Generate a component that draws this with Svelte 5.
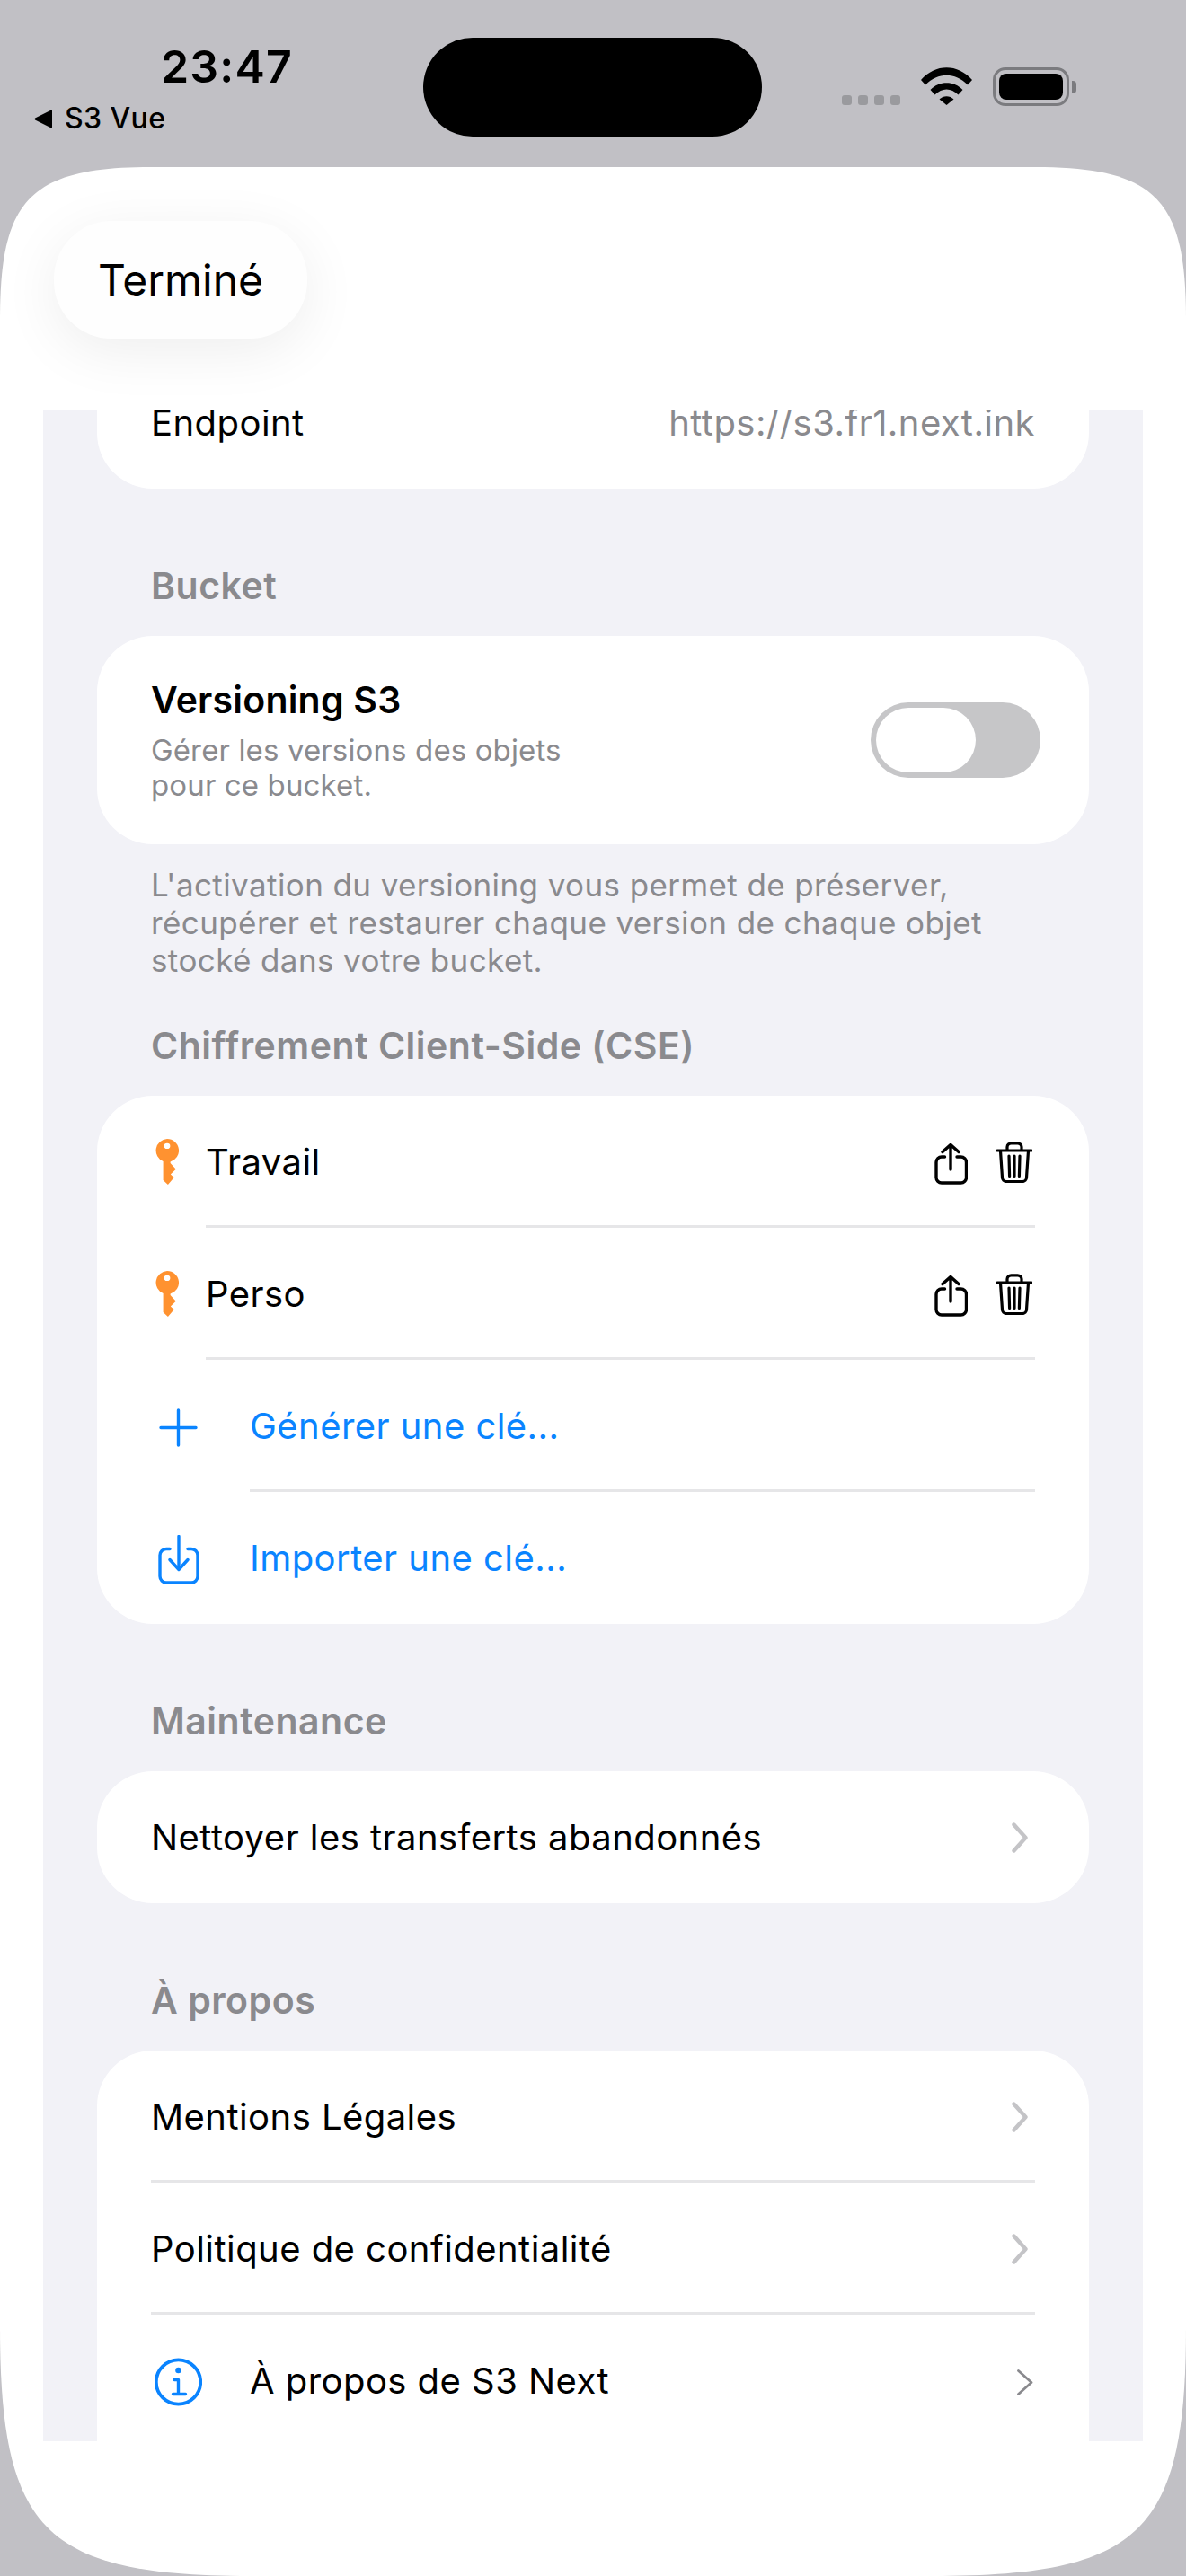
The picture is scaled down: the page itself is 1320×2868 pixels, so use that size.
<script lang="ts">
  const keys = ["Travail", "Perso"];
  const legal = ["Mentions Légales", "Politique de confidentialité"];
</script>

<div class="screen">
  <header class="status">
    <div class="status-left">
      <div class="time">23:47</div>
      <div class="back">
        <svg class="back-arrow" viewBox="0 0 21 21" width="21" height="21">
          <path d="M20 1.5 V19.5 Q20 21 18.5 20.2 L1 11.5 Q0 10.5 1 9.5 L18.5 .8 Q20 0 20 1.5 Z" fill="#000" />
        </svg>
        <span>S3 Vue</span>
      </div>
    </div>
    <div class="island"></div>
    <div class="status-right">
      <div class="dots">
        <i></i><i></i><i></i><i></i>
      </div>
      <svg class="wifi" viewBox="0 0 57 42" width="57" height="42">
        <path d="M0 14 C16 -4.5 41 -4.5 57 14 L52 19.5 C38 5 19 5 5 19.5 Z" fill="#000" />
        <path d="M10.5 25 C20 14.5 37 14.5 46.5 25 L41.5 30.5 C33.5 22.5 23.5 22.5 15.5 30.5 Z" fill="#000" />
        <path d="M20.5 35.5 C25 31 32 31 36.5 35.5 L28.5 42 Z" fill="#000" />
      </svg>
      <div class="battery">
        <div class="battery-shell"><div class="battery-level"></div></div>
        <div class="battery-nub"></div>
      </div>
    </div>
  </header>

  <main class="sheet">
    <div class="nav">
      <button type="button" class="done">Terminé</button>
    </div>

    <div class="form">
      <section class="card endpoint">
        <div class="row">
          <div class="row-body last">
            <span>Endpoint</span>
            <span class="value">https://s3.fr1.next.ink</span>
          </div>
        </div>
      </section>

      <h2 class="label">Bucket</h2>
      <section class="card versioning">
        <div class="versioning-text">
          <div class="versioning-title">Versioning S3</div>
          <div class="versioning-sub">Gérer les versions des objets<br />pour ce bucket.</div>
        </div>
        <div class="toggle"><div class="thumb"></div></div>
      </section>
      <p class="footnote">
        L'activation du versioning vous permet de préserver,<br />
        récupérer et restaurer chaque version de chaque objet<br />
        stocké dans votre bucket.
      </p>

      <h2 class="label after-note">Chiffrement Client-Side (CSE)</h2>
      <section class="card">
        {#each keys as name}
          <div class="row">
            <svg class="key" viewBox="0 0 26 51" width="26" height="51">
              <path
                fill-rule="evenodd"
                d="M13 0 A13 13 0 0 1 16.6 25.5 V27 L22.8 33.7 L16.8 39.5 L20.7 43 L13.9 51 L8.6 46 V25 A13 13 0 0 1 13 0 Z M13 4.8 A3.4 3.1 0 1 0 13 11 A3.4 3.1 0 1 0 13 4.8 Z"
                fill="#ff9230"
              />
            </svg>
            <div class="row-body">
              <span>{name}</span>
              <div class="actions">
                <svg class="share" viewBox="0 0 37 46" width="37" height="46" fill="none" stroke="#000" stroke-width="3.4" stroke-linecap="round" stroke-linejoin="round">
                  <path d="M18 2 V29 M9 9.5 L18 1.5 L27 9.5" />
                  <path d="M11.5 15 H8 A6 6 0 0 0 2 21 V38 A6 6 0 0 0 8 44 H29.5 A6 6 0 0 0 35.5 38 V21 A6 6 0 0 0 29.5 15 H25" />
                </svg>
                <svg class="trash" viewBox="0 0 40 46" width="40" height="46" fill="none" stroke="#000" stroke-width="3.2" stroke-linecap="round" stroke-linejoin="round">
                  <path d="M1 10 H39" />
                  <path d="M12 9 V6 A4.5 4.5 0 0 1 16.5 1.8 H23.5 A4.5 4.5 0 0 1 28 6 V9" />
                  <path d="M4.5 10.5 L6.5 40 A4.5 4.5 0 0 0 11 44.5 H29 A4.5 4.5 0 0 0 33.5 40 L35.5 10.5" />
                  <path d="M14 16 L14.6 38.5 M20 16 V38.5 M26 16 L25.4 38.5" />
                </svg>
              </div>
            </div>
          </div>
        {/each}
        <div class="row action">
          <div class="icon-cell">
            <svg viewBox="0 0 43 43" width="43" height="43" fill="none" stroke="#0a84ff" stroke-width="3.4" stroke-linecap="round">
              <path d="M21.5 2 V41 M2 21.5 H41" />
            </svg>
          </div>
          <div class="row-body"><span>Générer une clé...</span></div>
        </div>
        <div class="row action">
          <div class="icon-cell">
            <svg viewBox="0 0 46 55" width="46" height="55" fill="none" stroke="#0a84ff" stroke-width="3.4" stroke-linecap="round" stroke-linejoin="round">
              <path d="M13 15.5 H9 A7 7 0 0 0 2 22.5 V46 A7 7 0 0 0 9 53 H37 A7 7 0 0 0 44 46 V22.5 A7 7 0 0 0 37 15.5 H33" />
              <path d="M23 1.5 V38 M13 27.5 L23 38.5 L33 27.5" />
            </svg>
          </div>
          <div class="row-body last"><span>Importer une clé...</span></div>
        </div>
      </section>

      <h2 class="label">Maintenance</h2>
      <section class="card">
        <div class="row">
          <div class="row-body last">
            <span>Nettoyer les transferts abandonnés</span>
            <svg class="chevron" viewBox="0 0 18 34" width="18" height="34" fill="none" stroke="#c4c4c7" stroke-width="4.4" stroke-linecap="round" stroke-linejoin="round">
              <path d="M2.5 2.5 L15.5 17 L2.5 31.5" />
            </svg>
          </div>
        </div>
      </section>

      <h2 class="label">À propos</h2>
      <section class="card open-end">
        {#each legal as item}
          <div class="row">
            <div class="row-body">
              <span>{item}</span>
              <svg class="chevron" viewBox="0 0 18 34" width="18" height="34" fill="none" stroke="#c4c4c7" stroke-width="4.4" stroke-linecap="round" stroke-linejoin="round">
                <path d="M2.5 2.5 L15.5 17 L2.5 31.5" />
              </svg>
            </div>
          </div>
        {/each}
        <div class="row">
          <div class="icon-cell">
            <svg viewBox="0 0 53 54" width="53" height="54" fill="none" stroke="#0a84ff">
              <circle cx="26.5" cy="27" r="24.7" stroke-width="3.8" />
              <circle cx="26.5" cy="14" r="3.3" fill="#0a84ff" stroke="none" />
              <path d="M22 24.5 H26.5 V40 M20.5 40.5 H34.5" stroke-width="3.4" stroke-linecap="round" stroke-linejoin="round" />
            </svg>
          </div>
          <div class="row-body last">
            <span>À propos de S3 Next</span>
            <svg class="chevron thin" viewBox="0 0 18 29" width="18" height="29" fill="none" stroke="#8a8a8e" stroke-width="2.8" stroke-linecap="round" stroke-linejoin="round">
              <path d="M1.5 1.5 L16 14.5 L1.5 27.5" />
            </svg>
          </div>
        </div>
      </section>
    </div>
  </main>
</div>

<style>
  :global(body) {
    margin: 0;
    background: #c1c0c5;
  }

  .screen {
    width: 1320px;
    height: 2868px;
    background: #c1c0c5;
    font-family: Inter, "Liberation Sans", sans-serif;
    color: #000;
    overflow: hidden;
  }

  .status {
    position: relative;
    height: 186px;
    display: flex;
    justify-content: space-between;
  }

  .status-left {
    padding: 44px 0 0 38px;
  }

  .time {
    margin-left: 141px;
    font-size: 50px;
    line-height: 60px;
    font-weight: 600;
    letter-spacing: 1.2px;
  }

  .back {
    display: flex;
    align-items: center;
    gap: 13px;
    margin-top: 8px;
    font-size: 32px;
    line-height: 40px;
    font-weight: 500;
    letter-spacing: 0.4px;
  }

  .island {
    position: absolute;
    left: 471px;
    top: 42px;
    width: 377px;
    height: 110px;
    border-radius: 55px;
    background: #000;
  }

  .status-right {
    display: flex;
    align-items: flex-end;
    height: 43px;
    padding: 75px 122px 0 0;
  }

  .dots {
    display: flex;
    gap: 7px;
    margin-right: 23px;
    padding-bottom: 1px;
  }

  .dots i {
    width: 11px;
    height: 11px;
    border-radius: 3px;
    background: #9a9a9e;
  }

  .wifi {
    margin-right: 23px;
    margin-bottom: 1px;
  }

  .battery {
    display: flex;
    align-items: center;
    gap: 3px;
  }

  .battery-shell {
    box-sizing: border-box;
    width: 85px;
    height: 43px;
    padding: 4px;
    border: 3.5px solid #7b7b7f;
    border-radius: 14px;
  }

  .battery-level {
    width: 100%;
    height: 100%;
    border-radius: 8px;
    background: #000;
  }

  .battery-nub {
    width: 5px;
    height: 14px;
    border-radius: 0 4px 4px 0;
    background: #7b7b7f;
  }

  .sheet {
    height: 2682px;
    background: #fff;
    clip-path: path("M0 171 C0 39 30 0 168 0 L1152 0 C1290 0 1320 39 1320 171 L1320 2404 C1320 2634 1270 2682 1037 2682 L283 2682 C50 2682 0 2634 0 2404 Z");
  }

  .nav {
    box-sizing: border-box;
    height: 270px;
    padding: 60px 0 0 60px;
  }

  .done {
    width: 282px;
    height: 131px;
    padding: 0;
    border: 0;
    border-radius: 64px;
    background: #fefefe;
    box-shadow: 0 14px 64px rgba(0, 0, 0, 0.07);
    color: #000;
    font: inherit;
    font-size: 48px;
  }

  .form {
    height: 2262px;
    margin: 0 48px;
    padding: 0 60px;
    overflow: hidden;
    background: #f2f2f7;
  }

  .card {
    border-radius: 62px;
    background: #fff;
    font-size: 40px;
    letter-spacing: 0.45px;
  }

  .card.open-end {
    padding-bottom: 80px;
  }

  .endpoint {
    margin-top: -59px;
  }

  .label {
    margin: 83px 0 31px 60px;
    font-size: 41px;
    line-height: 50px;
    font-weight: 600;
    letter-spacing: 0.5px;
    color: #8a8a8e;
  }

  .label.after-note {
    margin-top: 49px;
  }

  .row {
    display: flex;
    align-items: stretch;
    padding-left: 60px;
  }

  .row.action {
    padding-left: 64px;
    color: #0a84ff;
  }

  .row:has(.icon-cell) {
    padding-left: 64px;
  }

  .row:has(.key) {
    padding-left: 65px;
    gap: 30px;
  }

  .key {
    align-self: center;
  }

  .row-body {
    box-sizing: border-box;
    flex: 1;
    display: flex;
    align-items: center;
    justify-content: space-between;
    height: 147px;
    margin-right: 60px;
    padding-top: 3px;
    border-bottom: 3px solid #e6e6e8;
  }

  .row-body.last {
    border-bottom-color: transparent;
  }

  .icon-cell {
    display: flex;
    align-items: center;
    justify-content: center;
    width: 53px;
    margin-right: 53px;
    margin-top: 3px;
  }

  .value {
    color: #8a8a8e;
  }

  .actions {
    display: flex;
    align-items: center;
    gap: 32px;
    padding-right: 3px;
  }

  .share {
    margin-top: 5px;
  }

  .trash {
    margin-top: 1px;
  }

  .chevron {
    margin-right: 8px;
  }

  .chevron.thin {
    margin-top: 3px;
    margin-right: 2px;
  }

  .versioning {
    box-sizing: border-box;
    height: 232px;
    display: flex;
    align-items: center;
    justify-content: space-between;
    padding: 0 54px 0 60px;
  }

  .versioning-title {
    font-size: 41px;
    line-height: 50px;
    font-weight: 600;
    letter-spacing: 0.2px;
  }

  .versioning-sub {
    margin-top: 12px;
    font-size: 33px;
    line-height: 39.5px;
    letter-spacing: 0.13px;
    color: #8a8a8e;
  }

  .toggle {
    box-sizing: border-box;
    width: 189px;
    height: 84px;
    padding: 6px;
    border-radius: 42px;
    background: #c6c6c8;
  }

  .thumb {
    width: 111px;
    height: 72px;
    border-radius: 36px;
    background: #fff;
  }

  .footnote {
    margin: 24px 0 0 60px;
    font-size: 35px;
    line-height: 42px;
    letter-spacing: 0.4px;
    color: #8a8a8e;
  }
</style>
